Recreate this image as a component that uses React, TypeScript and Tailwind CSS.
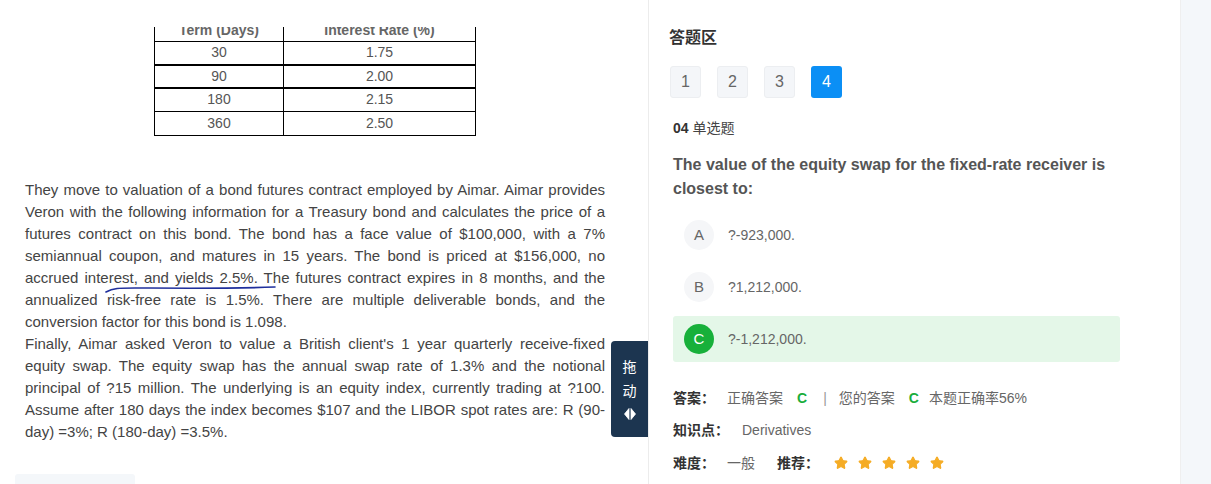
import { Star } from 'lucide-react';

const font = { fontFamily: '"Liberation Sans", "Noto Sans CJK SC", sans-serif' };

const rates = [
    { term: '30', rate: '1.75', thick: true },
    { term: '90', rate: '2.00', thick: true },
    { term: '180', rate: '2.15', thick: false },
    { term: '360', rate: '2.50', thick: false },
];

const options = [
    { key: 'A', text: '?-923,000.', correct: false },
    { key: 'B', text: '?1,212,000.', correct: false },
    { key: 'C', text: '?-1,212,000.', correct: true },
];

function DragHandle() {
    return (
        <div className="absolute left-[611px] top-[341px] w-[37px] h-[96px] bg-[#1c3550] rounded-l-[4px] flex flex-col items-center pt-[14px] text-white text-[14px] leading-[24px]">
            <span>拖</span>
            <span>动</span>
            <svg width="12" height="14" viewBox="0 0 12 14" className="mt-[4px]">
                <path d="M5 1.5 L0.5 7 L5 12.5 Z" fill="#fff" strokeLinejoin="round" stroke="#fff" strokeWidth="0.8" />
                <path d="M7 1.5 L11.5 7 L7 12.5 Z" fill="#fff" strokeLinejoin="round" stroke="#fff" strokeWidth="0.8" />
            </svg>
        </div>
    )
}

export default function App() {
    return (
        <div className="flex h-[484px] w-[1211px] overflow-hidden bg-white" style={font}>
            {/* left: reading material */}
            <section className="relative w-[648px] shrink-0 overflow-hidden">
                <div className="pt-[18px]">
                    <table className="ml-[154px] border-collapse text-[14px] text-[#555] text-center">
                        <tbody>
                            <tr className="h-[23px]">
                                <td className="w-[129px] border border-black font-bold text-[#666]">Term (Days)</td>
                                <td className="w-[192px] border border-black font-bold text-[#666]">Interest Rate (%)</td>
                            </tr>
                            {rates.map((r) => (
                                <tr key={r.term} className={r.thick ? 'h-[23px]' : 'h-[24px]'}>
                                    <td className={r.thick ? 'border border-b-2 border-black' : 'border border-black'}>{r.term}</td>
                                    <td className={r.thick ? 'border border-b-2 border-black' : 'border border-black'}>{r.rate}</td>
                                </tr>
                            ))}
                        </tbody>
                    </table>
                    <div className="relative mt-[43px] ml-[25px] w-[580px] text-[15px] leading-[22px] text-[#444] text-justify">
                        <p>
                            They move to valuation of a bond futures contract employed by Aimar. Aimar provides Veron with the following information for a Treasury bond and calculates the price of a futures contract on this bond. The bond has a face value of $100,000, with a 7% semiannual coupon, and matures in 15 years. The bond is priced at $156,000, no accrued interest, and yields 2.5%. The futures contract expires in 8 months, and the annualized risk-free rate is 1.5%. There are multiple deliverable bonds, and the conversion factor for this bond is 1.098.
                        </p>
                        <p>
                            Finally, Aimar asked Veron to value a British client's 1 year quarterly receive-fixed equity swap. The equity swap has the annual swap rate of 1.3% and the notional principal of ?15 million. The underlying is an equity index, currently trading at ?100. Assume after 180 days the index becomes $107 and the LIBOR spot rates are: R (90-day) =3%; R (180-day) =3.5%.
                        </p>
                        <svg className="absolute left-[80px] top-[106px]" width="172" height="10" viewBox="0 0 172 10">
                            <path d="M1 7 C 8 3, 14 3, 30 3 S 120 4, 170 2" stroke="#1f2f9c" strokeWidth="1.6" fill="none" strokeLinecap="round" />
                        </svg>
                    </div>
                    <div className="mt-[31px] ml-[15px] w-[120px] h-[20px] bg-[#f4f7fa] rounded-t-[3px]" />
                </div>
                <div className="absolute inset-x-0 top-0 h-[27px] bg-white" />
                <DragHandle />
            </section>

            {/* right: answer area */}
            <section className="w-[532px] shrink-0 border-l border-[#ececec] pl-[20px] text-[#333]">
                <h3 className="pt-[26px] text-[16px] leading-[24px] font-bold text-[#333]">答题区</h3>
                <div className="mt-[16px] ml-[1px] flex gap-[16px]">
                    {[1, 2, 3, 4].map((n) => (
                        <div
                            key={n}
                            className={n === 4
                                ? 'w-[31px] h-[32px] rounded-[3px] bg-[#0b8ff5] text-white flex items-center justify-center text-[16px]'
                                : 'w-[31px] h-[32px] rounded-[3px] bg-[#f4f6f9] border border-[#eceef1] text-[#666] flex items-center justify-center text-[16px]'}
                        >{n}</div>
                    ))}
                </div>
                <div className="pl-[4px]">
                    <p className="mt-[20px] text-[14px] leading-[20px] text-[#444]"><span className="font-bold text-[#333]">04</span> 单选题</p>
                    <p className="mt-[15px] w-[447px] text-[16px] leading-[24px] font-bold text-[#555]">
                        The value of the equity swap for the fixed-rate receiver is closest to:
                    </p>
                    <div className="mt-[11px] w-[447px] flex flex-col gap-[6px]">
                        {options.map((o) => (
                            <div key={o.key} className={o.correct ? 'h-[46px] flex items-center pl-[11px] rounded-[3px] bg-[#e4f7e8]' : 'h-[46px] flex items-center pl-[11px]'}>
                                <span className={o.correct
                                    ? 'w-[30px] h-[30px] rounded-full bg-[#17b03a] text-white flex items-center justify-center text-[15px]'
                                    : 'w-[30px] h-[30px] rounded-full bg-[#f5f6f8] text-[#666] flex items-center justify-center text-[15px]'}
                                >{o.key}</span>
                                <span className="ml-[14px] text-[14px] text-[#666]">{o.text}</span>
                            </div>
                        ))}
                    </div>
                    <div className="mt-[20px] text-[14px] text-[#666]">
                        <div className="h-[32px] flex items-center">
                            <span className="font-bold text-[#333]">答案：</span>
                            <span className="ml-[12px]">正确答案</span>
                            <span className="ml-[14px] font-bold text-[#1aad3c]">C</span>
                            <span className="ml-[16px] text-[#999]">|</span>
                            <span className="ml-[12px]">您的答案</span>
                            <span className="ml-[14px] font-bold text-[#1aad3c]">C</span>
                            <span className="ml-[10px]">本题正确率56%</span>
                        </div>
                        <div className="h-[33px] flex items-center">
                            <span className="font-bold text-[#333]">知识点：</span>
                            <span className="ml-[13px]">Derivatives</span>
                        </div>
                        <div className="h-[32px] flex items-center">
                            <span className="font-bold text-[#333]">难度：</span>
                            <span className="ml-[12px]">一般</span>
                            <span className="ml-[22px] font-bold text-[#333]">推荐：</span>
                            <span className="ml-[15px] flex gap-[10px]">
                                {[0, 1, 2, 3, 4].map((i) => (
                                    <Star key={i} size={14} className="fill-[#f5ac25] text-[#f5ac25]" />
                                ))}
                            </span>
                        </div>
                    </div>
                </div>
            </section>

            {/* far right gutter */}
            <aside className="flex-1 border-l border-[#efefef] bg-[#f4f7fa]" />
        </div>
    )
}
